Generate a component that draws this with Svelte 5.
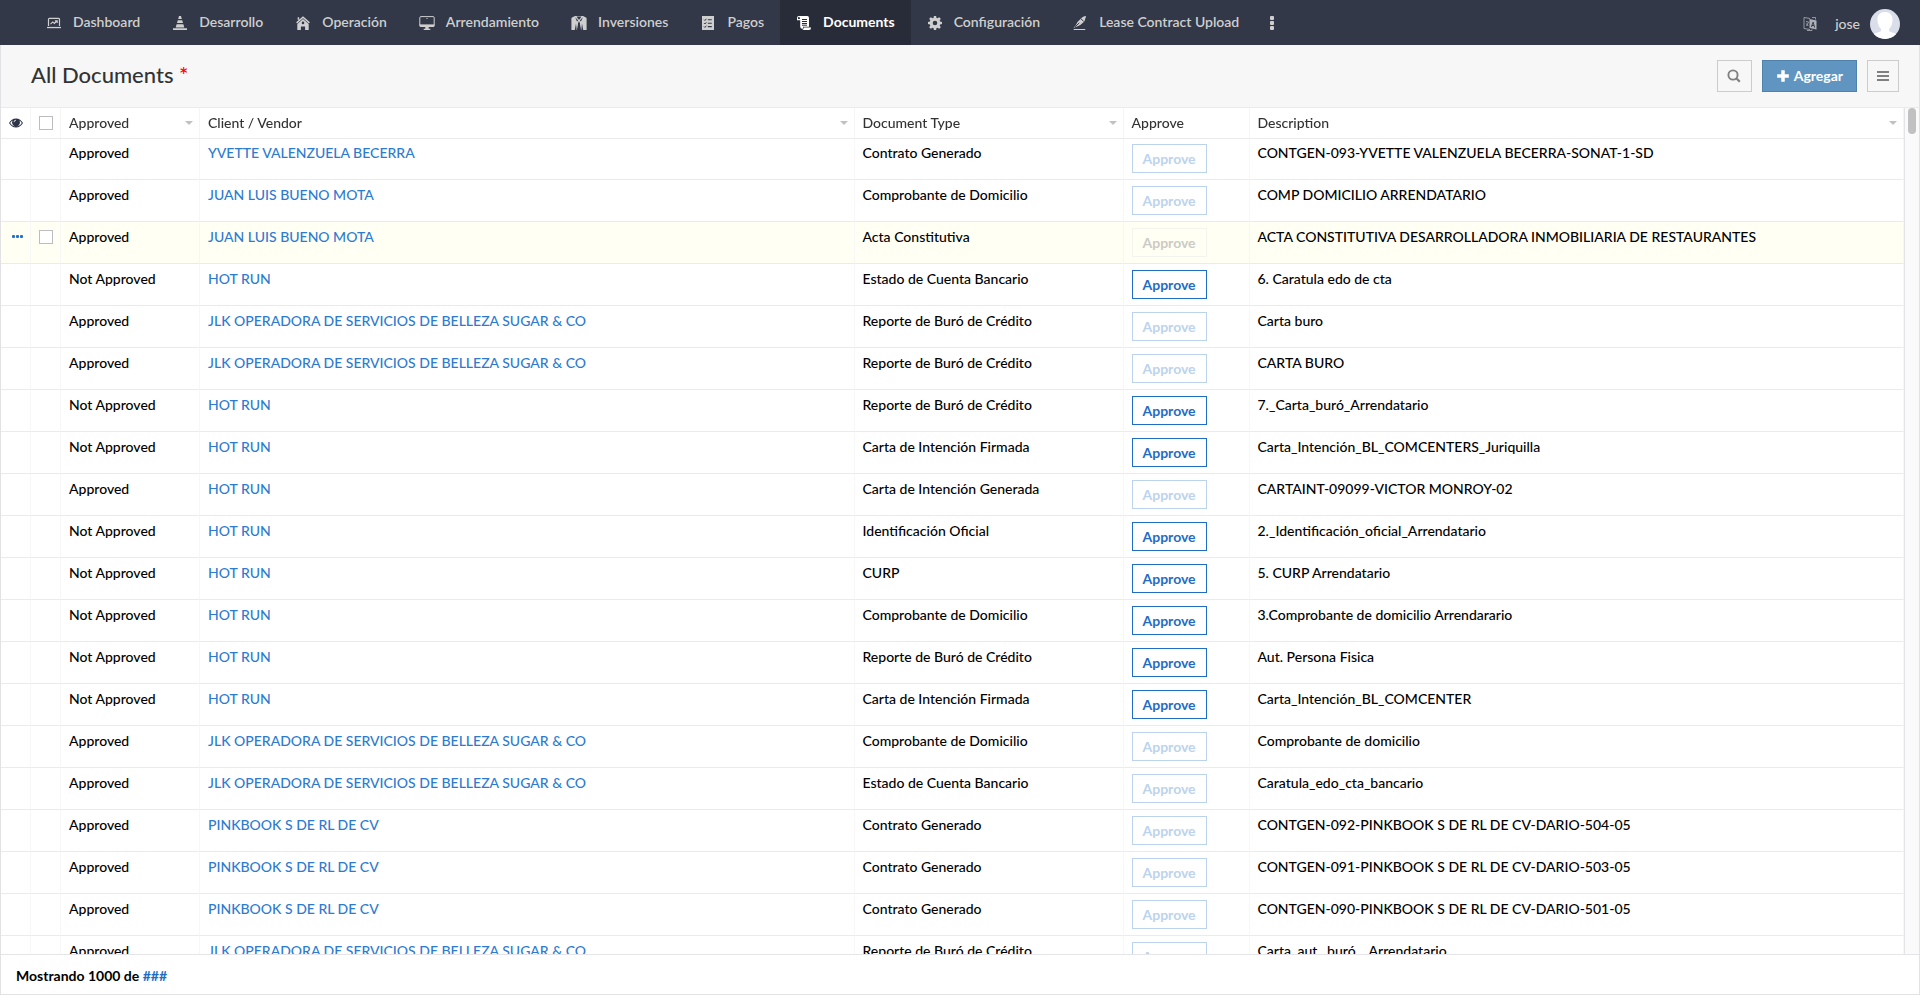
<script>
  const nav = [
    { label: 'Dashboard', icon: 'laptop' },
    { label: 'Desarrollo', icon: 'cone' },
    { label: 'Operación', icon: 'house' },
    { label: 'Arrendamiento', icon: 'screen' },
    { label: 'Inversiones', icon: 'suit' },
    { label: 'Pagos', icon: 'list' },
    { label: 'Documents', icon: 'scroll', active: true },
    { label: 'Configuración', icon: 'gear' },
    { label: 'Lease Contract Upload', icon: 'pen' }
  ];

  const jlk = 'JLK OPERADORA DE SERVICIOS DE BELLEZA SUGAR & CO';
  const pink = 'PINKBOOK S DE RL DE CV';

  const rows = [
    [true, 'YVETTE VALENZUELA BECERRA', 'Contrato Generado', 'CONTGEN-093-YVETTE VALENZUELA BECERRA-SONAT-1-SD'],
    [true, 'JUAN LUIS BUENO MOTA', 'Comprobante de Domicilio', 'COMP DOMICILIO ARRENDATARIO'],
    [true, 'JUAN LUIS BUENO MOTA', 'Acta Constitutiva', 'ACTA CONSTITUTIVA DESARROLLADORA INMOBILIARIA DE RESTAURANTES'],
    [false, 'HOT RUN', 'Estado de Cuenta Bancario', '6. Caratula edo de cta'],
    [true, jlk, 'Reporte de Buró de Crédito', 'Carta buro'],
    [true, jlk, 'Reporte de Buró de Crédito', 'CARTA BURO'],
    [false, 'HOT RUN', 'Reporte de Buró de Crédito', '7._Carta_buró_Arrendatario'],
    [false, 'HOT RUN', 'Carta de Intención Firmada', 'Carta_Intención_BL_COMCENTERS_Juriquilla'],
    [true, 'HOT RUN', 'Carta de Intención Generada', 'CARTAINT-09099-VICTOR MONROY-02'],
    [false, 'HOT RUN', 'Identificación Oficial', '2._Identificación_oficial_Arrendatario'],
    [false, 'HOT RUN', 'CURP', '5. CURP Arrendatario'],
    [false, 'HOT RUN', 'Comprobante de Domicilio', '3.Comprobante de domicilio Arrendarario'],
    [false, 'HOT RUN', 'Reporte de Buró de Crédito', 'Aut. Persona Fisica'],
    [false, 'HOT RUN', 'Carta de Intención Firmada', 'Carta_Intención_BL_COMCENTER'],
    [true, jlk, 'Comprobante de Domicilio', 'Comprobante de domicilio'],
    [true, jlk, 'Estado de Cuenta Bancario', 'Caratula_edo_cta_bancario'],
    [true, pink, 'Contrato Generado', 'CONTGEN-092-PINKBOOK S DE RL DE CV-DARIO-504-05'],
    [true, pink, 'Contrato Generado', 'CONTGEN-091-PINKBOOK S DE RL DE CV-DARIO-503-05'],
    [true, pink, 'Contrato Generado', 'CONTGEN-090-PINKBOOK S DE RL DE CV-DARIO-501-05'],
    [true, jlk, 'Reporte de Buró de Crédito', 'Carta_aut._buró__Arrendatario']
  ];
  const current = 2;
</script>

{#snippet glyph(name)}
  <svg class="glyph" viewBox="0 0 16 16" aria-hidden="true">
    {#if name === 'laptop'}
      <path d="M2.500 11V4.200q0-.900.900-.900h9.200q.900 0 .900.900V11" fill="none" stroke="currentColor" stroke-width="1.200" />
      <path d="M1 11.900h14v1.300H1z" />
      <path d="M4.500 9.200l2.200-2.300 1.700 1.600 2.600-2.600M8.900 5.900h2.300v2.200" fill="none" stroke="currentColor" stroke-width="1.100" />
    {:else if name === 'cone'}
      <path d="M7 1h2l.8 3H6.200zM5.800 5.300h4.400l.8 2.800H5zM4.600 9.300h6.800l.9 3.200H3.700zM1 13.200h14V15H1z" />
    {:else if name === 'house'}
      <path d="M1.600 7.900L8 2.300l6.400 5.600M3.400 4.800V2.200" fill="none" stroke="currentColor" stroke-width="1.500" />
      <path fill-rule="evenodd" d="M8 4l5.700 4.900V15h-3.600v-3.600H5.900V15H2.300V8.900zM8 6.600a1.300 1.300 0 100 2.600 1.300 1.300 0 000-2.600z" />
    {:else if name === 'screen'}
      <path d="M1.900 1.600h12.200q1.100 0 1.100 1.100v7.600H.8V2.700q0-1.100 1.100-1.100z" fill="none" stroke="currentColor" stroke-width="1" />
      <path d="M.4 9.600h15.200v1.200q0 1.100-1.100 1.100h-13Q.4 11.900.4 10.800zM6.300 12h3.400v1.700h1.600V15H4.700v-1.300h1.600zM7.500 3h1v1h-1z" />
    {:else if name === 'suit'}
      <path fill-rule="evenodd" d="M4 1h8l3 1.400q.6.400.6 1.200V15h-3.400L11 8.400 10.300 15H9.400L9 8.500 8 6 7 8.500 6.600 15h-.9L5 8.400 3.800 15H.4V3.600q0-.8.6-1.200zM5.600 1.400l1.200 2.200L8 4.800l1.200-1.200 1.200-2.200zM4.200 2.300L6 6.400l1.200-.8zM11.800 2.300L10 6.400l-1.200-.8z" />
      <path d="M6 15l1-5 1-2.600L9 10l1 5z" class="shirt" />
    {:else if name === 'list'}
      <path fill-rule="evenodd" d="M2 1h12v14H2zM7.800 4.200v1.100h4V4.200zM7.800 7.700v1.100h4V7.700zM7.800 11.100v1.100h4v-1.100z" />
      <path d="M4 4.600l.9.900 1.500-1.700M4 8.100l.9.900 1.500-1.700M4 11.500l.9.900 1.500-1.700" fill="none" class="cut" />
    {:else if name === 'scroll'}
      <path d="M2.800 1h8.500q1.700 0 1.700 1.800v8.900H7v1.200q0 1-.9.900-1.800 0-1.900-2V5.200H1V3Q1 1 2.800 1zm0 1.100Q2 2.100 2 3v1.100h1.900V3q0-.9-1.100-.9z" fill-rule="evenodd" />
      <path d="M7.600 12.500H15v.6q0 1.900-1.900 1.900H6q1.600-.3 1.600-2.100z" />
      <path d="M6 4.500h5M6 6.500h5M6 8.500h5M6 10.200h5" fill="none" class="cut" />
    {:else if name === 'gear'}
      <path fill-rule="evenodd" d="M6.900 1h2.200l.4 1.900 1 .4 1.700-1.100 1.600 1.600-1.100 1.700.4 1 1.900.4v2.200l-1.900.4-.4 1 1.100 1.700-1.600 1.600-1.700-1.100-1 .4L9.100 15H6.900l-.4-1.900-1-.4-1.700 1.100-1.600-1.600 1.100-1.700-.4-1L1 9.100V6.900l1.900-.4.4-1-1.100-1.700 1.600-1.600 1.700 1.100 1-.4zM8 5.700a2.300 2.300 0 100 4.600 2.300 2.300 0 000-4.600z" />
    {:else if name === 'pen'}
      <path d="M13.200 1l.9.500-1 2.600q.1 1.600-1.300 2.800l-3.500 3.200-3.300 1.300-3.400 1.700 2.300-3.200 1.600-2.800 4-4q1.600-1.700 3.700-2.100z" />
      <path d="M3 11.800l4.300-3.900M9 3.900l2.700 2.400" fill="none" class="cut" />
      <path d="M1.700 14h11.600v1H1.700z" />
    {:else if name === 'lang'}
      <g fill="none" stroke="currentColor" stroke-width=".8">
        <path d="M8 2.500L2 1.500v11l6 1M4 5.500l2.500.5-2 4M4.200 7.500l2 2.500M10 1.500h3.500v2M5 14.500h5v-1" />
      </g>
      <path fill-rule="evenodd" d="M7.500 3l7 1.500v9l-7-1.500zM10.700 5.700L9 10.800l1 .2.300-1h1.500l.3 1.500 1 .2-1.500-5.700zM10.600 9l.4-1.700.5 1.800z" />
    {/if}
  </svg>
{/snippet}

<div class="page">
  <header class="topbar">
    <nav>
      {#each nav as item}
        <a href="#top" class:active={item.active}>
          {@render glyph(item.icon)}
          <span>{item.label}</span>
        </a>
      {/each}
      <button class="more" aria-label="Más"><i></i><i></i><i></i></button>
    </nav>
    <div class="user">
      <button class="lang" aria-label="Idioma">{@render glyph('lang')}</button>
      <a href="#top">jose</a>
      <svg class="avatar" viewBox="0 0 30 30" aria-hidden="true">
        <defs><clipPath id="disc"><circle cx="15" cy="15" r="15" /></clipPath></defs>
        <circle cx="15" cy="15" r="15" fill="#d9deea" />
        <path clip-path="url(#disc)" fill="#fff" d="M15 3c5 0 8 3 7.500 8.500-.2 4-1.500 6.500-3.500 8.500v2c2 1.500 6 1.500 8.500 4V30h-25v-4c2.500-2.500 6.500-2.500 8.500-4v-2c-2-2-3.300-4.500-3.500-8.500C7 6 10 3 15 3z" />
      </svg>
    </div>
  </header>

  <main>
    <div class="heading">
      <h1>All Documents <span>*</span></h1>
      <div class="actions">
        <button class="search" aria-label="Buscar">
          <svg viewBox="0 0 14 14"><circle cx="6" cy="6" r="4.600" fill="none" stroke="currentColor" stroke-width="1.900" /><path d="M9.500 9.500l3.300 3.300" stroke="currentColor" stroke-width="2.200" /></svg>
        </button>
        <button class="add">
          <svg viewBox="0 0 12 12" aria-hidden="true"><path d="M4.500 1h3v3.500H11v3H7.500V11h-3V7.500H1v-3h3.500z" fill="currentColor" /></svg>
          Agregar
        </button>
        <button class="menu" aria-label="Menú">
          <svg viewBox="0 0 14 14"><path d="M1 2h12v2H1zM1 6h12v2H1zM1 10h12v2H1z" fill="currentColor" /></svg>
        </button>
      </div>
    </div>

    <div class="grid">
      <div class="scroller">
        <table>
          <colgroup>
            <col class="c-tool" /><col class="c-tool" /><col class="c-status" /><col /><col class="c-type" /><col class="c-act" /><col />
          </colgroup>
          <thead>
            <tr>
              <th class="tool">
                <button class="eye" aria-label="Columnas">
                  <svg viewBox="0 0 14 10"><path fill-rule="evenodd" d="M7 .5c3 0 5.500 2 7 4.500-1.500 2.500-4 4.500-7 4.500S1.500 7.500 0 5C1.500 2.500 4 .5 7 .5zM3.800 2.500C2.600 3.100 1.800 4 1.200 5 2.500 7 4.500 8.500 7 8.500S11.500 7 12.800 5c-.6-1-1.400-1.900-2.600-2.500a3.800 3.800 0 11-6.400 0z" /><circle cx="7" cy="4.200" r="3.300" /><path d="M5 4.200a2 2 0 012-2" fill="none" stroke="#fff" stroke-width=".8" /></svg>
                </button>
              </th>
              <th class="tool"><input type="checkbox" aria-label="Todos" /></th>
              <th><div>Approved<i></i></div></th>
              <th><div>Client / Vendor<i></i></div></th>
              <th><div>Document Type<i></i></div></th>
              <th><div>Approve</div></th>
              <th><div>Description<i></i></div></th>
            </tr>
          </thead>
          <tbody>
            {#each rows as [approved, client, type, description], n}
              <tr class:current={n === current}>
                <td class="tool">
                  {#if n === current}<button class="dots" aria-label="Acciones"><i></i><i></i><i></i></button>{/if}
                </td>
                <td class="tool">
                  {#if n === current}<input type="checkbox" aria-label="Seleccionar" />{/if}
                </td>
                <td>{approved ? 'Approved' : 'Not Approved'}</td>
                <td><a href="#top">{client}</a></td>
                <td>{type}</td>
                <td><button class="approve" disabled={approved}>Approve</button></td>
                <td>{description}</td>
              </tr>
            {/each}
          </tbody>
        </table>
      </div>
      <div class="track"><div class="thumb"></div></div>
    </div>

    <footer>Mostrando 1000 de <a href="#top">###</a></footer>
  </main>
</div>

<style>
  :global(body) { margin: 0; }
  .page {
    display: flex;
    flex-direction: column;
    height: 100vh;
    font-family: Lato, "Open Sans", sans-serif;
    font-size: 14px;
    line-height: 20px;
    color: #000;
    background: #fff;
  }
  .page * { box-sizing: border-box; }
  a { text-decoration: none; color: #2d7bd0; }
  button { font: inherit; padding: 0; margin: 0; border: 0; background: none; }
  svg { display: block; }

  .topbar {
    display: flex;
    justify-content: space-between;
    flex: none;
    height: 45px;
    background: #323848;
  }
  nav { display: flex; padding-left: 30px; }
  nav a {
    display: flex;
    align-items: center;
    gap: 11px;
    padding: 0 16px;
    color: #cfcfcf;
    font-weight: 600;
    white-space: nowrap;
  }
  nav a.active { background: #272c38; color: #fff; font-weight: 700; --back: #272c38; }
  nav a span { padding-bottom: 1px; }
  .glyph { width: 16px; height: 16px; fill: currentColor; }
  .cut { stroke: var(--back, #323848); stroke-width: 1; }
  .shirt { fill: #323848; }
  .more { display: flex; flex-direction: column; justify-content: center; gap: 1px; padding: 0 15px; }
  .more i { width: 4px; height: 4px; border-radius: 1px; background: #cfcfcf; }
  .user { display: flex; align-items: center; padding: 3px 20px 0 0; }
  .user a { color: #cfcfcf; font-weight: 500; margin: 0 10px 0 17px; }
  .lang { color: #aeb1b8; }
  .avatar { width: 30px; height: 30px; }

  main {
    display: flex;
    flex-direction: column;
    flex: 1;
    min-height: 0;
    border: 1px solid #e2e2e4;
    border-top: 0;
  }
  .heading {
    display: flex;
    justify-content: space-between;
    align-items: center;
    flex: none;
    height: 63px;
    padding: 0 20px 0 30px;
    background: #f7f7f7;
    border-bottom: 1px solid #ebebeb;
  }
  h1 { margin: 0; padding-bottom: 2px; font-size: 22px; line-height: 30px; font-weight: 500; color: #333; }
  h1 span { color: #f00; }
  .actions { display: flex; gap: 10px; }
  .actions button {
    display: flex;
    align-items: center;
    justify-content: center;
    height: 32px;
    border: 1px solid #ccc;
    color: #808080;
  }
  .actions .search { width: 35px; }
  .actions .menu { width: 32px; }
  .actions svg { width: 14px; height: 14px; }
  .actions .add {
    gap: 4px;
    padding: 0 13px;
    color: #fff;
    font-weight: 700;
    background: #5f95c0;
    border-color: #4f82ab;
  }

  .grid { display: flex; flex: 1; min-height: 0; }
  .scroller { flex: 1; min-width: 0; overflow: auto; scrollbar-width: none; border-right: 1px solid #e4e4e6; }
  .track { width: 14px; background: #fafafa; padding: 0 3px; }
  .thumb { width: 8px; height: 26px; border-radius: 4px; background: #c1c1c1; }

  table { width: 100%; table-layout: fixed; border-collapse: separate; border-spacing: 0; }
  .c-tool { width: 30px; }
  .c-status { width: 139px; }
  .c-type { width: 269px; }
  .c-act { width: 126px; }
  th {
    position: sticky;
    top: 0;
    z-index: 1;
    height: 30px;
    padding: 0 8px;
    background: #fff;
    border-right: 1px solid #f5f5f5;
    box-shadow: 0 1px #ebebeb;
    color: #333;
    font-weight: 500;
    text-align: left;
  }
  th div { display: flex; justify-content: space-between; align-items: center; }
  th i { border: 4px solid transparent; border-top-color: #bfc1c6; border-bottom: 0; margin-right: -2px; }
  td {
    height: 42px;
    padding: 5px 8px 0;
    border-right: 1px solid #f7f7f7;
    border-bottom: 1px solid #ebebeb;
    vertical-align: top;
    white-space: nowrap;
    font-weight: 500;
  }
  .current td { background: #fffff3; }
  .tool { padding-left: 0; padding-right: 0; }
  .tool input {
    display: block;
    appearance: none;
    width: 14px;
    height: 14px;
    margin: 0 auto;
    border: 1px solid #bcbdc2;
    background: #fff;
  }
  td.tool { padding-top: 8px; }
  .eye { display: block; margin: 0 auto; fill: #2d3446; }
  .eye svg { width: 14px; height: 10px; }
  .dots { display: flex; gap: 1px; padding: 5px 0 0 11px; }
  .dots i { width: 3px; height: 3px; border-radius: 1px; background: #2471c8; }
  .approve {
    display: block;
    height: 29px;
    margin-top: 1px;
    padding: 0 10px;
    border: 1px solid #1f6dc4;
    background: #fff;
    color: #1f6dc4;
    font-weight: 700;
  }
  .approve:disabled { border-color: #bcd3ed; color: #bcd3ed; }
  .current .approve:disabled { border-color: #f4f4ee; color: #cbcbc6; background: transparent; }

  footer {
    flex: none;
    height: 40px;
    padding: 11px 15px 0;
    border-top: 1px solid #e4e4ea;
    font-weight: 700;
  }
  footer a { color: #1f6dc4; }
</style>
